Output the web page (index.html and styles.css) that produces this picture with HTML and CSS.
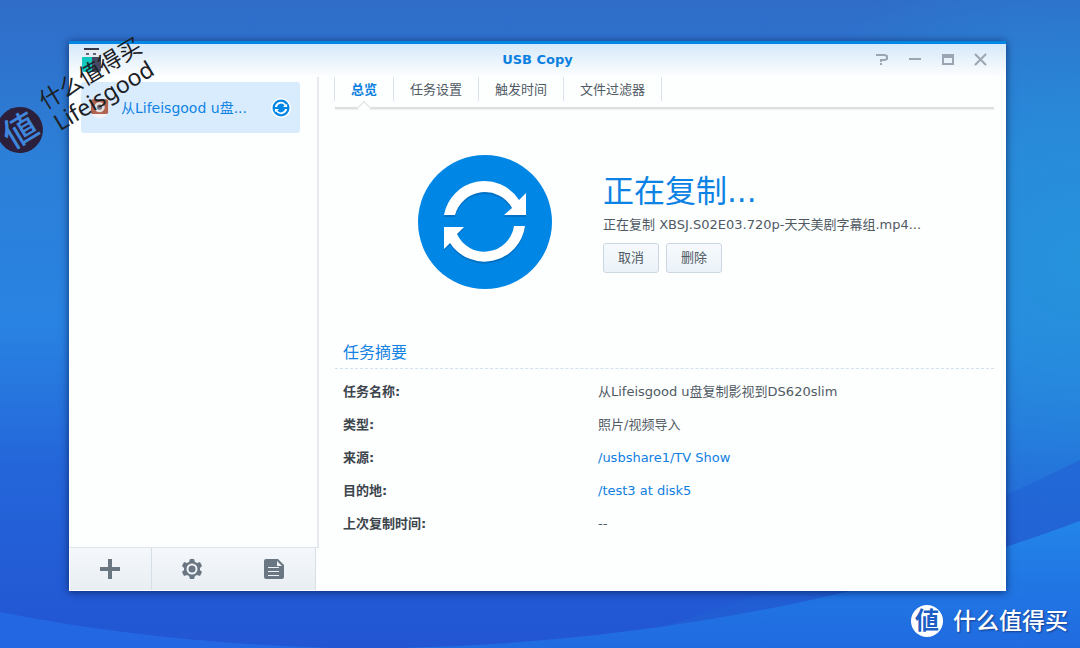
FILE: index.html
```html
<!DOCTYPE html>
<html lang="zh-CN">
<head>
<meta charset="utf-8">
<title>USB Copy</title>
<link rel="stylesheet" href="styles.css">
</head>
<body class="desktop">
<svg class="wallpaper" viewBox="0 0 1080 648" preserveAspectRatio="none" aria-hidden="true">
  <defs>
    <linearGradient id="sky" x1="0" y1="0" x2="0" y2="1">
      <stop offset="0" stop-color="#2f6cc8"/>
      <stop offset=".25" stop-color="#2c80d8"/>
      <stop offset=".5" stop-color="#2983e2"/>
      <stop offset=".72" stop-color="#2466da"/>
      <stop offset="1" stop-color="#2255d2"/>
    </linearGradient>
    <radialGradient id="glow" gradientUnits="userSpaceOnUse" cx="1080" cy="260" r="330">
      <stop offset="0" stop-color="#2692dc"/>
      <stop offset="1" stop-color="#2692dc" stop-opacity="0"/>
    </radialGradient>
    <linearGradient id="wave" x1="0" y1="0" x2="0" y2="1">
      <stop offset="0" stop-color="#2385e8"/>
      <stop offset=".5" stop-color="#2176e4"/>
      <stop offset="1" stop-color="#206be0"/>
    </linearGradient>
  </defs>
  <rect width="1080" height="648" fill="url(#sky)"/>
  <rect width="1080" height="648" fill="url(#glow)"/>
  <path d="M1080 460Q900 550 600 648H1080Z" fill="#2260d4" opacity=".6"/>
  <path d="M1080 521Q760 640 400 648H1080Z" fill="url(#wave)"/>
  <path d="M0 612Q150 642 330 648H0Z" fill="#2368e2"/>
</svg>

<main class="window">
  <header class="titlebar">
    <svg class="app-icon" viewBox="0 0 24 24" aria-hidden="true">
      <path d="M4 0h15v9H4z" fill="#e9ebf2"/>
      <path d="M4 0h15v2H4z" fill="#34384a"/>
      <path d="M6 5h3v2H6zM13 5h3v2h-3z" fill="#62667a"/>
      <path d="M2 9h10v15H4a2 2 0 0 1-2-2z" fill="#10c6bd"/>
      <path d="M12 9h9v13a2 2 0 0 1-2 2h-7z" fill="#454962"/>
    </svg>
    <h1 class="title">USB Copy</h1>
    <div class="controls">
      <button class="control" type="button" aria-label="帮助"><svg viewBox="0 0 14 14"><path d="M1 2h9l2 1v3L10 7H6v2M5 11h2"/></svg></button>
      <button class="control" type="button" aria-label="最小化"><svg viewBox="0 0 14 14"><path d="M1 6h12"/></svg></button>
      <button class="control" type="button" aria-label="最大化"><svg viewBox="0 0 14 14"><path d="M2 2h10v9H2zM2 4h10"/></svg></button>
      <button class="control" type="button" aria-label="关闭"><svg viewBox="0 0 14 14"><path d="M1 1l11 11M12 1L1 12"/></svg></button>
    </div>
  </header>

  <div class="body">
    <aside class="sidebar">
      <div class="tasks">
        <button class="task" type="button">
          <svg class="task-type" viewBox="0 0 22 26" aria-hidden="true">
            <circle cx="11" cy="14" r="11" fill="#f3f1f5"/>
            <rect x="1" y="3" width="20" height="17" rx="2" fill="#b0644f"/>
            <circle cx="11" cy="12" r="6" fill="#e4dedf"/>
            <circle cx="11" cy="12" r="3" fill="#7b7880"/>
          </svg>
          <span class="task-name">从Lifeisgood u盘...</span>
          <svg class="task-state" viewBox="0 0 134 134" aria-hidden="true">
            <circle cx="67" cy="67" r="67" fill="#fff"/>
            <circle cx="67" cy="67" r="57" fill="#0086e5"/>
            <g fill="#fff">
              <path d="M26 60A41 41 0 0 1 101 45L108 38V60H80L91 50A28 28 0 0 0 40 60Z"/>
              <path d="M108 74A41 41 0 0 1 33 89L26 96V74H54L43 84A28 28 0 0 0 94 74Z"/>
            </g>
          </svg>
        </button>
      </div>
      <div class="toolbar">
        <button class="tool" type="button" aria-label="新增"><svg viewBox="0 0 22 22"><path d="M9 1h4v8h8v4h-8v8H9v-8H1V9h8z"/></svg></button>
        <button class="tool" type="button" aria-label="设置"><svg viewBox="0 0 22 22"><path fill-rule="evenodd" d="M9 1h4l1 3 2 1 3-1 2 4-2 2v2l2 2-2 4-3-1-2 1-1 3H9l-1-3-2-1-3 1-2-4 2-2v-2L1 8l2-4 3 1 2-1zM11 5.500a5.500 5.500 0 1 0 0 11a5.500 5.500 0 1 0 0-11z"/><circle cx="11" cy="11" r="3.500"/></svg></button>
        <button class="tool" type="button" aria-label="日志"><svg viewBox="0 0 22 22"><path fill-rule="evenodd" d="M3 1h12l6 6v12a2 2 0 0 1-2 2H3a2 2 0 0 1-2-2V3a2 2 0 0 1 2-2zM14 3v5h5zM5 9v1h11V9zM5 13v1h11v-1zM5 17v1h11v-1z"/></svg></button>
      </div>
    </aside>

    <section class="content">
      <nav class="tabs">
        <a class="tab active" href="#overview">总览</a>
        <a class="tab" href="#settings">任务设置</a>
        <a class="tab" href="#trigger">触发时间</a>
        <a class="tab" href="#filter">文件过滤器</a>
      </nav>

      <div class="status">
        <svg class="status-icon" viewBox="0 0 134 134" aria-hidden="true">
          <circle cx="67" cy="67" r="67" fill="#0086e5"/>
          <g fill="#0069b8" transform="translate(0 2)" opacity=".7">
            <path d="M26 60A41 41 0 0 1 101 45L108 38V60H86L94 53A31 31 0 0 0 37 60Z"/>
            <path d="M107 71A41 41 0 0 1 32 88L26 94V72H46L39 79A30 30 0 0 0 96 71Z"/>
          </g>
          <g fill="#fff">
            <path d="M26 60A41 41 0 0 1 101 45L108 38V60H86L94 53A31 31 0 0 0 37 60Z"/>
            <path d="M107 71A41 41 0 0 1 32 88L26 94V72H46L39 79A30 30 0 0 0 96 71Z"/>
          </g>
        </svg>
        <div class="status-text">
          <h2 class="status-title">正在复制...</h2>
          <p class="status-file">正在复制 XBSJ.S02E03.720p-天天美剧字幕组.mp4...</p>
          <div class="actions">
            <button class="button" type="button">取消</button>
            <button class="button" type="button">删除</button>
          </div>
        </div>
      </div>

      <h3 class="summary-title">任务摘要</h3>
      <table class="summary">
        <tr><th scope="row">任务名称:</th><td>从Lifeisgood u盘复制影视到DS620slim</td></tr>
        <tr><th scope="row">类型:</th><td>照片/视频导入</td></tr>
        <tr><th scope="row">来源:</th><td><a href="#source">/usbshare1/TV Show</a></td></tr>
        <tr><th scope="row">目的地:</th><td><a href="#target">/test3 at disk5</a></td></tr>
        <tr><th scope="row">上次复制时间:</th><td>--</td></tr>
      </table>
    </section>
  </div>
</main>

<div class="stamp">
  <span class="stamp-seal">値</span>
  <span class="stamp-text">什么值得买<br>Lifeisgood</span>
</div>
<div class="brand">
  <span class="brand-seal">値</span>
  <span>什么值得买</span>
</div>
</body>
</html>
```
FILE: styles.css
```css
* {
  box-sizing: border-box;
}

.desktop {
  display: flex;
  min-height: 100vh;
  margin: 0;
  padding: 41px 74px 57px 69px;
  position: relative;
  overflow: hidden;
  background: #2a7cd8;
  color: #505a64;
  font: 13px/20px "DejaVu Sans", "Noto Sans CJK SC", sans-serif;
}

.wallpaper {
  position: absolute;
  inset: 0;
  width: 100%;
  height: 100%;
}

button {
  margin: 0;
  padding: 0;
  border: 0;
  background: none;
  color: inherit;
  font: inherit;
}

a {
  color: #0f80e2;
  text-decoration: none;
}

.window {
  position: relative;
  flex: 1;
  display: flex;
  flex-direction: column;
  min-width: 0;
  border-top: 3px solid #0086e5;
  background: #fdfefe;
  box-shadow: 0 1px 8px rgba(0, 20, 70, .7);
}

.titlebar {
  display: grid;
  grid-template-columns: 1fr auto 1fr;
  align-items: center;
  height: 33px;
  padding: 0 18px 2px;
  background: linear-gradient(#d6e9f9, #fdfefe);
}

.app-icon {
  width: 24px;
  height: 24px;
  margin-left: -7px;
}

.title {
  margin: 0;
  color: #0b80e0;
  font-size: 13px;
}

.controls {
  display: flex;
  justify-content: flex-end;
  gap: 19px;
}

.control,
.control svg {
  display: block;
  width: 14px;
  height: 14px;
}

.control svg {
  fill: none;
  stroke: #9ca6b2;
  stroke-width: 2;
}

.body {
  flex: 1;
  display: flex;
}

.sidebar {
  display: flex;
  flex-direction: column;
  width: 250px;
}

.tasks {
  flex: 1;
  padding: 5px 17px 0 12px;
  border-right: 2px solid #e6eaee;
  border-bottom: 1px solid #dde4ea;
}

.task {
  display: flex;
  align-items: center;
  gap: 12px;
  width: 100%;
  height: 51px;
  padding: 0 9px;
  border-radius: 3px;
  background: #d9ecfe;
  color: #0f83e4;
  font-size: 14px;
  text-align: left;
}

.task-type {
  width: 19px;
  height: 24px;
}

.task-name {
  flex: 1;
  white-space: nowrap;
}

.task-state {
  width: 20px;
  height: 20px;
}

.toolbar {
  display: grid;
  grid-template-columns: repeat(3, 1fr);
  height: 42px;
  margin: 0 3px 1px 1px;
  border-right: 1px solid #d5dfe7;
  background: linear-gradient(#f4f8fc, #e9eef3);
}

.tool {
  display: grid;
  place-items: center;
}

.tool:first-child {
  border-right: 1px solid #d5dfe7;
}

.tool svg {
  width: 22px;
  height: 22px;
  fill: #6a7681;
}

.content {
  flex: 1;
  min-width: 0;
  padding: 0 12px 0 16px;
}

.tabs {
  display: flex;
  height: 32px;
  padding-bottom: 6px;
  border-bottom: 2px solid #dfdfdf;
  box-shadow: 0 1px 1px #f0f0f0;
}

.tab {
  position: relative;
  padding: 3px 16px;
  border-right: 1px solid #dbe3ee;
  color: #505a64;
}

.tab:first-child {
  padding: 3px 16px;
  box-shadow: -1px 0 #dbe3ee;
}

.tab.active {
  color: #0b80e0;
  font-weight: bold;
}

.tab.active::after {
  content: "";
  position: absolute;
  left: 50%;
  bottom: -12px;
  width: 9px;
  height: 9px;
  border: solid #dfdfdf;
  border-width: 1px 0 0 1px;
  background: #fdfefe;
  transform: translateX(-50%) rotate(45deg);
}

.status {
  display: flex;
  align-items: center;
  gap: 51px;
  padding: 46px 0 52px 83px;
}

.status-icon {
  flex: none;
  width: 134px;
  height: 134px;
}

.status-text {
  padding-bottom: 5px;
}

.status-title {
  margin: 0;
  color: #0b82e4;
  font-size: 31px;
  font-weight: normal;
  line-height: 48px;
}

.status-file {
  margin: 0 0 8px;
}

.actions {
  display: flex;
  gap: 7px;
}

.button {
  width: 56px;
  height: 30px;
  border: 1px solid #ccd7e3;
  border-radius: 3px;
  background: linear-gradient(#f6fafd, #ebf2f8);
}

.summary-title {
  margin: 0;
  padding: 0 8px 3px;
  border-bottom: 1px dashed #d3e0ee;
  color: #1583e2;
  font-size: 16px;
  font-weight: normal;
  line-height: 24px;
}

.summary {
  width: 100%;
  margin-top: 6px;
  border-collapse: collapse;
  table-layout: fixed;
}

.summary th,
.summary td {
  height: 33px;
  padding: 0 0 0 8px;
  text-align: left;
}

.summary th {
  width: 255px;
  color: #3c444c;
}

.stamp {
  position: absolute;
  left: -12px;
  top: 72px;
  display: flex;
  align-items: center;
  gap: 9px;
  color: #1c2024;
  font: 23px/26px "Noto Sans", "Noto Sans CJK SC", sans-serif;
  text-align: center;
  white-space: nowrap;
  transform: rotate(-31deg);
}

.stamp-seal {
  width: 46px;
  border-radius: 50%;
  background: #2b1f3b;
  color: #3f86dc;
  font-size: 34px;
  font-weight: 500;
  line-height: 46px;
}

.brand {
  position: absolute;
  right: 12px;
  bottom: 11px;
  display: flex;
  align-items: center;
  gap: 10px;
  color: #fff;
  font-size: 23px;
  font-weight: 500;
  line-height: 32px;
  text-shadow: 1px 1px 2px #123c8c;
}

.brand-seal {
  width: 32px;
  border-radius: 50%;
  background: #fff;
  color: #1d5ec4;
  font-size: 24px;
  font-weight: bold;
  text-align: center;
  text-shadow: none;
}
```
